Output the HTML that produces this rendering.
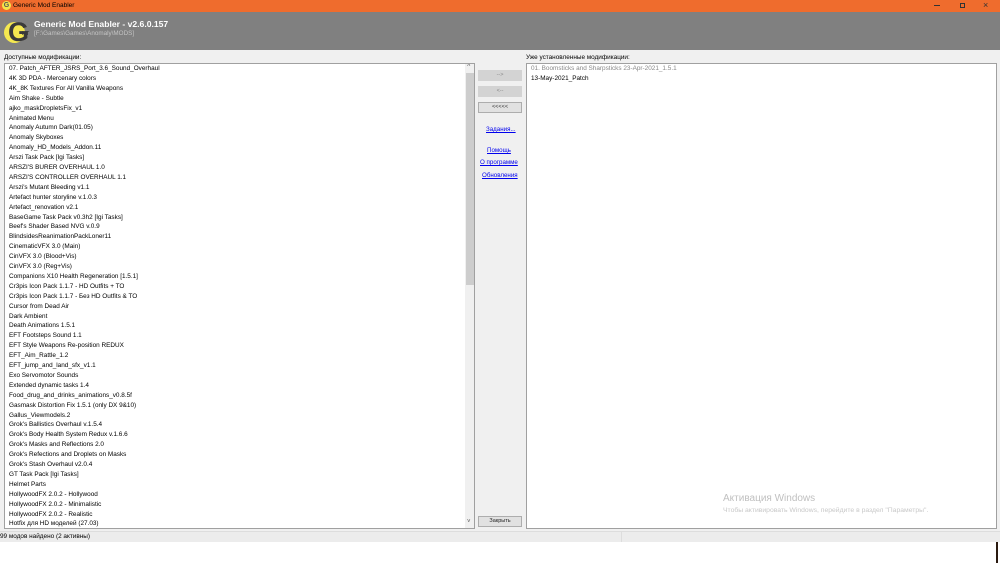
<!DOCTYPE html>
<html><head><meta charset="utf-8"><style>
*{margin:0;padding:0;box-sizing:border-box}
body{width:1000px;height:563px;background:#fff;font-family:"Liberation Sans","DejaVu Sans",sans-serif;position:relative;overflow:hidden;color:#000}
.abs{position:absolute}
#tb{left:0;top:0;width:1000px;height:12px;background:#ef6c2d}
#hd{left:0;top:12px;width:1000px;height:38px;background:#808080}
#bd{left:0;top:50px;width:1000px;height:492px;background:#f0f0f0}
.list{background:#fff;border:1px solid #a0a0a0}
.it{position:absolute;left:4px;font-size:6.4px;line-height:10px;white-space:nowrap}
.lbl{font-size:6.4px;white-space:nowrap}
.btn{position:absolute;left:478px;width:44px;height:11px;background:#d3d3d3;font-size:5.5px;color:#888;text-align:center;line-height:11px}
.lnk{position:absolute;font-size:6.2px;color:#0000ee;text-decoration:underline;white-space:nowrap}
</style></head><body>
<div id="tb" class="abs"></div>
<div class="abs" style="left:2px;top:1px;width:9px;height:9px;border-radius:50%;background:#f5e64a;font-size:7px;font-weight:bold;line-height:9px;text-align:center;color:#555">G</div>
<div class="abs lbl" style="left:13px;top:2px;font-size:6.5px;color:#000">Generic Mod Enabler</div>
<div class="abs" style="left:934px;top:5px;width:6px;height:1px;background:#333"></div>
<div class="abs" style="left:960px;top:3px;width:5px;height:5px;border:1px solid #333"></div>
<div class="abs" style="left:983px;top:0px;font-size:9px;color:#333">×</div>
<div id="hd" class="abs"></div>
<div class="abs" style="left:4px;top:22px;width:21px;height:21px;border-radius:50%;background:#f5e850"></div>
<div class="abs" style="left:8px;top:17px;font-size:27px;font-weight:bold;line-height:30px;color:#3a3a3a">G</div>
<div class="abs" style="left:22px;top:31px;font-size:5px;font-weight:bold;color:#3a3a3a">MT</div>
<div class="abs" style="left:34px;top:19px;font-size:8.6px;font-weight:bold;color:#fff;white-space:nowrap">Generic Mod Enabler - v2.6.0.157</div>
<div class="abs" style="left:34px;top:30px;font-size:6.3px;color:#c4c4c4;white-space:nowrap">[F:\Games\Games\Anomaly\MODS]</div>
<div id="bd" class="abs"></div>
<div class="abs lbl" style="left:4px;top:54px">Доступные модификации:</div>
<div class="abs lbl" style="left:526px;top:54px">Уже установленные модификации:</div>
<div class="abs list" style="left:4px;top:63px;width:471px;height:466px;overflow:hidden">
<div class="abs" style="left:460px;top:0;width:10px;height:464px;background:#f0f0f0"></div>
<div class="abs" style="left:461px;top:9px;width:8px;height:212px;background:#cdcdcd"></div>
<div class="abs" style="left:462px;top:-1px;font-size:6px;color:#555">˄</div>
<div class="abs" style="left:462px;top:455px;font-size:6px;color:#555">˅</div>
<div id="items"></div>
</div>
<div class="btn" style="top:70px">--&gt;</div>
<div class="btn" style="top:86px">&lt;--</div>
<div class="btn" style="top:102px;background:#e1e1e1;border:1px solid #adadad;color:#333;line-height:9px">&lt;&lt;&lt;&lt;&lt;</div>
<div class="lnk" style="left:486px;top:126px">Задания...</div>
<div class="lnk" style="left:487px;top:147px">Помощь</div>
<div class="lnk" style="left:480px;top:159px">О программе</div>
<div class="lnk" style="left:482px;top:172px">Обновления</div>
<div class="btn" style="top:516px;background:#e1e1e1;border:1px solid #adadad;color:#222;line-height:9px">Закрыть</div>
<div class="abs list" style="left:526px;top:63px;width:471px;height:466px">
<div class="it" style="left:4px;top:0px;color:#888">01. Boomsticks and Sharpsticks 23-Apr-2021_1.5.1</div>
<div class="it" style="left:4px;top:10px">13-May-2021_Patch</div>
</div>
<div class="abs" style="left:723px;top:493px;font-size:10px;color:#c0c0c0;white-space:nowrap">Активация Windows</div>
<div class="abs" style="left:723px;top:507px;font-size:6.8px;color:#c8c8c8;white-space:nowrap">Чтобы активировать Windows, перейдите в раздел "Параметры".</div>
<div class="abs" style="left:0;top:531px;width:1000px;height:11px;background:#ececec;border-top:1px solid #ddd"></div>
<div class="abs" style="left:621px;top:531px;width:1px;height:11px;background:#ddd"></div>
<div class="abs lbl" style="left:0;top:533px">99 модов найдено (2 активны)</div>
<div class="abs" style="left:996px;top:542px;width:2px;height:21px;background:#2a1a10"></div>
<script>
var n=["07. Patch_AFTER_JSRS_Port_3.6_Sound_Overhaul","4K 3D PDA - Mercenary colors","4K_8K Textures For All Vanilla Weapons","Aim Shake - Subtle","ajko_maskDropletsFix_v1","Animated Menu","Anomaly Autumn Dark(01.05)","Anomaly Skyboxes","Anomaly_HD_Models_Addon.11","Arszi Task Pack [Igi Tasks]","ARSZI'S BURER OVERHAUL 1.0","ARSZI'S CONTROLLER OVERHAUL 1.1","Arszi's Mutant Bleeding v1.1","Artefact hunter storyline v.1.0.3","Artefact_renovation v2.1","BaseGame Task Pack v0.3h2 [Igi Tasks]","Beef's Shader Based NVG v.0.9","BlindsidesReanimationPackLoner11","CinematicVFX 3.0 (Main)","CinVFX 3.0 (Blood+Vis)","CinVFX 3.0 (Reg+Vis)","Companions X10 Health Regeneration [1.5.1]","Cr3pis Icon Pack 1.1.7 - HD Outfits + TO","Cr3pis Icon Pack 1.1.7 - Без HD Outfits & TO","Cursor from Dead Air","Dark Ambient","Death Animations 1.5.1","EFT Footsteps Sound 1.1","EFT Style Weapons Re-position REDUX","EFT_Aim_Rattle_1.2","EFT_jump_and_land_sfx_v1.1","Exo Servomotor Sounds","Extended dynamic tasks 1.4","Food_drug_and_drinks_animations_v0.8.5f","Gasmask Distortion Fix 1.5.1 (only DX 9&10)","Gallus_Viewmodels.2","Grok's Ballistics Overhaul v.1.5.4","Grok's Body Health System Redux v.1.6.6","Grok's Masks and Reflections 2.0","Grok's Refections and Droplets on Masks","Grok's Stash Overhaul v2.0.4","GT Task Pack [Igi Tasks]","Helmet Parts","HollywoodFX 2.0.2 - Hollywood","HollywoodFX 2.0.2 - Minimalistic","HollywoodFX 2.0.2 - Realistic","Hotfix для HD моделей (27.03)"];
var h="";for(var i=0;i<n.length;i++){h+='<div class="it" style="top:'+(i*9.9)+'px">'+n[i].replace(/&/g,"&amp;")+'</div>';}
document.getElementById("items").innerHTML=h;
</script>
</body></html>
